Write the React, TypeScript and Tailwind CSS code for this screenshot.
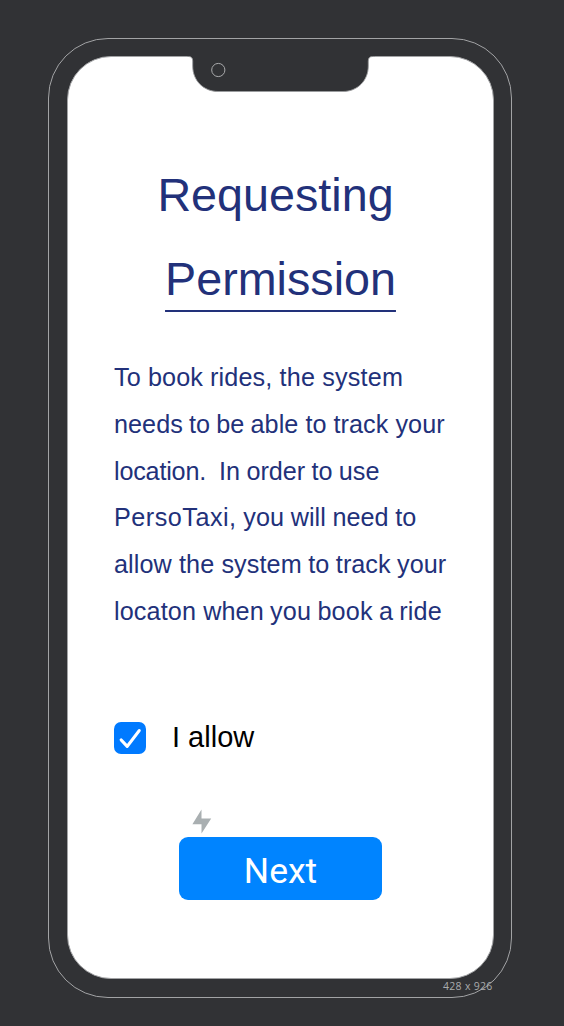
const lines = [
  { text: 'To book rides,', rest: ' the system', first: 'tracking-[0.11px]', second: 'tracking-[0.18px]' },
  { text: 'needs to be able', rest: ' to track your', first: 'tracking-[0.05px] [word-spacing:-0.9px]', second: 'tracking-[0.05px]' },
  { text: 'location. ', rest: ' In order to use', first: 'tracking-[-0.2px]', second: 'tracking-[0px] [word-spacing:-0.7px]' },
  { text: 'PersoTaxi,', rest: ' you will need to', first: 'tracking-[0.5px]', second: 'tracking-[0.02px] [word-spacing:-0.3px]' },
  { text: 'allow the system', rest: ' to track your', first: 'tracking-[0.1px]', second: 'tracking-[0.02px] [word-spacing:-0.5px]' },
  { text: 'locaton when', rest: ' you book a ride', first: 'tracking-[0.12px]', second: 'tracking-[0.15px] [word-spacing:-0.9px]' },
];

function Notch() {
  return (
    <svg className="absolute left-[119px] top-[-3px]" width="188" height="40" viewBox="187 54 188 40" fill="none">
      <path d="M187 54V56.5H188.5Q192.7 56.5 192.7 61V66C192.7 81 204 91.5 218 91.5H343C357 91.5 368.3 81 368.3 66V61Q368.3 56.5 372.5 56.5H375V54Z" fill="#313235" />
      <path d="M187 56.5H188.5Q192.7 56.5 192.7 61V66C192.7 81 204 91.5 218 91.5H343C357 91.5 368.3 81 368.3 66V61Q368.3 56.5 372.5 56.5H375" stroke="#9b9c9e" strokeWidth="0.9" />
      <circle cx="218.3" cy="70" r="6.6" stroke="#a9aaac" />
    </svg>
  );
}

export default function App() {
  return (
    <main className="h-[1026px] w-[564px] overflow-hidden bg-[#313235] pl-[48px] pt-[38px] font-['Liberation_Sans',sans-serif]">
      <div className="relative h-[960px] w-[464px] rounded-[60px] border border-[#a2a3a5] pl-[18px] pt-[17px]">
        <section className="relative flex h-[923px] w-[427px] flex-col rounded-[44px] border border-[#a2a3a5] bg-white">
          <Notch />
          <h1 className="mt-[96px] whitespace-pre text-center text-[46.7px] font-normal leading-[84px] text-[#22317a]">
            <span className="block pl-[3px]">{'Requesting\u00a0'}</span>
            <span className="mx-auto block w-[231px] underline decoration-2 underline-offset-[15px]">Permission</span>
          </h1>
          <p className="ml-[46px] mt-[33px] text-[25.2px] leading-[46.8px] text-[#22317a]">
            {lines.map((line) => (
              <span key={line.text} className="block whitespace-pre">
                <span className={line.first}>{line.text}</span>
                <span className={line.second}>{line.rest}</span>
              </span>
            ))}
          </p>
          <label className="ml-[46px] mt-[87px] flex h-8 items-center text-[29px] text-black">
            <span className="mr-[26px] flex size-8 items-center justify-center rounded-[7px] bg-[#007aff]">
              <svg width="32" height="32" viewBox="0 0 32 32" fill="none" stroke="white" strokeWidth="3.2" strokeLinecap="round" strokeLinejoin="round">
                <path d="M7.2 18L13.2 24.4L25.2 8.6" />
              </svg>
            </span>
            I allow
          </label>
          <svg className="ml-[124px] mt-[55px]" width="20" height="25" viewBox="0 0 20 25" fill="#a9afb1">
            <path d="M9.5 0.5V9.5H19.2L9.5 24.5V15.2H0.4Z" />
          </svg>
          <button className="ml-[111px] mt-[3px] h-[63px] w-[203px] rounded-[9px] bg-[#0084ff] pt-[6px] font-['Roboto',sans-serif] text-[35.5px] font-normal leading-none text-white">Next</button>
        </section>
        <span className="absolute left-[394px] top-[940px] whitespace-nowrap font-['Open_Sans',sans-serif] text-[10.5px] leading-[14px] tracking-[0.3px] text-[#a9abad]">428 x 926</span>
      </div>
    </main>
  );
}
